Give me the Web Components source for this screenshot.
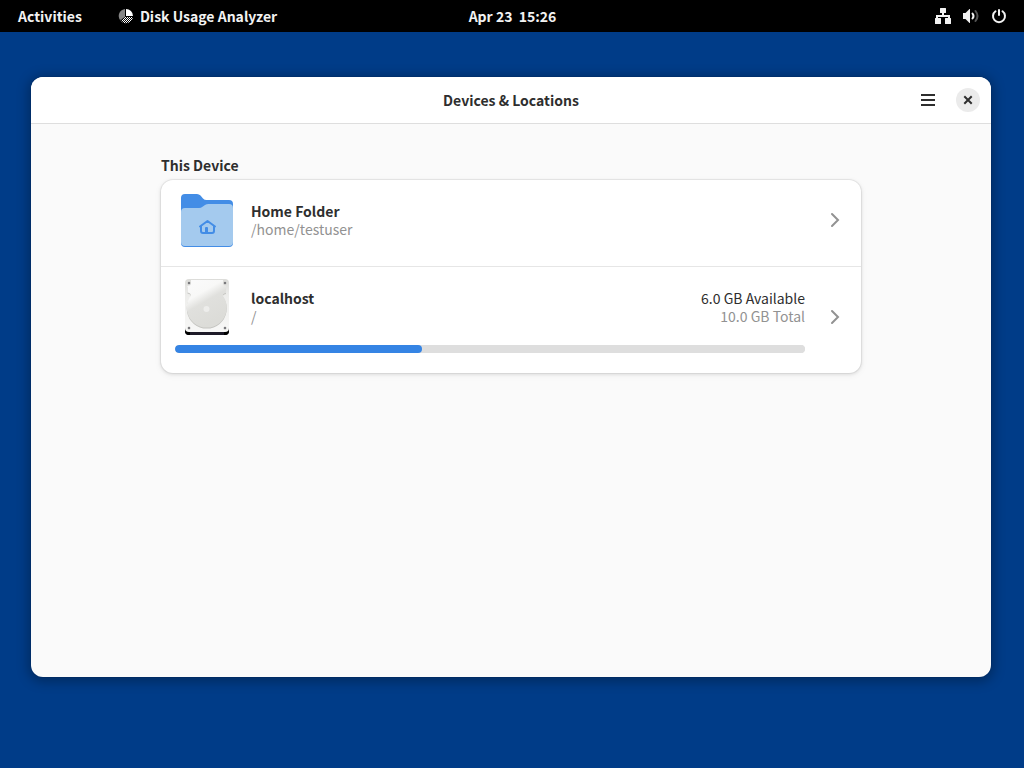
<!DOCTYPE html>
<html lang="en">
<head>
<meta charset="utf-8">
<title>Disk Usage Analyzer</title>
<style>
html, body { height: 100%; margin: 0; }
body { background: #003c88; font-family: "Noto Sans CJK SC", "Noto Sans", sans-serif; font-size: 14px; line-height: 18px; color: #2e2e2e; }
</style>
</head>
<body>
<desktop-shell>
  <top-bar slot="bar"></top-bar>
  <app-window heading="Devices &amp; Locations">
    <location-list heading="This Device">
      <location-row name="Home Folder" path="/home/testuser"><folder-icon slot="icon"></folder-icon></location-row>
      <location-row name="localhost" path="/" available="6.0 GB Available" total="10.0 GB Total" used="39.2"><drive-icon slot="icon"></drive-icon></location-row>
    </location-list>
  </app-window>
</desktop-shell>
<script>
class Base extends HTMLElement {
  connectedCallback() {
    if (!this.shadowRoot) this.attachShadow({ mode: "open" }).innerHTML = this.render();
  }
  text(name) {
    return (this.getAttribute(name) || "").replace(/&/g, "&amp;").replace(/</g, "&lt;");
  }
}

customElements.define("desktop-shell", class extends Base {
  render() {
    return `<style>
      :host { display: flex; flex-direction: column; min-height: 100vh; }
      main { flex: 1; display: flex; padding: 45px 33px 91px 31px; }
      ::slotted(app-window) { flex: 1; }
    </style><slot name="bar"></slot><main><slot></slot></main>`;
  }
});

customElements.define("top-bar", class extends Base {
  render() {
    return `<style>
      :host { display: block; background: #000; color: #f2f2f2; font-weight: 700; }
      header { display: grid; grid-template-columns: 1fr auto 1fr; align-items: center; height: 32px; padding: 0 17px 0 18px; }
      nav { display: flex; gap: 36px; }
      button { display: flex; align-items: center; gap: 6px; border: 0; padding: 0; background: none; font: inherit; color: inherit; white-space: pre; }
      .status { justify-self: end; gap: 12px; }
      svg { display: block; width: 16px; height: 16px; }
    </style>
    <header>
      <nav>
        <button>Activities</button>
        <button><svg viewBox="0 0 16 16" aria-hidden="true">
          <defs><pattern id="dots" width="2" height="2" patternUnits="userSpaceOnUse"><path d="M0 0h1v1H0zM1 1h1v1H1z" fill="#fff"/></pattern></defs>
          <path d="M7 1A7 7 0 0 0 2 12L7 9z" fill="#858585"/>
          <path d="M8 1a7 7 0 0 1 7 7H8z" fill="#fff"/>
          <path d="M7 9h8a7 7 0 0 1-12.500 3.500z" fill="url(#dots)"/>
        </svg>Disk Usage Analyzer</button>
      </nav>
      <button>Apr 23  15:26</button>
      <button class="status" aria-label="System menu">
        <svg viewBox="0 0 16 16" fill="#f2f2f2"><path d="M5.500 0h5q.5 0 .5.500v4q0 .5-.5.500H9v2h6v3h.5q.5 0 .5.500v5q0 .5-.5.500h-5q-.5 0-.5-.5v-5q0-.5.500-.5H13V9H3v1h2.500q.5 0 .5.500v5q0 .5-.5.500h-5Q0 16 0 15.500v-5Q0 10 .5 10H1V7h6V5H5.500Q5 5 5 4.500v-4Q5 0 5.500 0z"/></svg>
        <svg viewBox="0 0 16 16" fill="none" stroke="#f2f2f2" stroke-width="2" stroke-linecap="round"><path d="M0 5h2.500L6.500 1H7v14h-.5l-4-4H0z" fill="#f2f2f2" stroke="none"/><path d="M9.500 5.500q2 2.500 0 5"/><path d="M12.500 3q4 5 0 10" opacity=".35"/></svg>
        <svg viewBox="0 0 16 16" fill="none" stroke="#f2f2f2" stroke-width="2" stroke-linecap="round"><path d="M8 2v5M4.500 3.300a6 6 0 1 0 7 0"/></svg>
      </button>
    </header>`;
  }
});

customElements.define("app-window", class extends Base {
  render() {
    return `<style>
      :host { display: flex; flex-direction: column; overflow: hidden; border-radius: 12px; background: #fafafa; box-shadow: 0 2px 12px 3px rgba(0,0,0,.28), 0 0 0 1px rgba(0,0,0,.06); }
      header { display: grid; grid-template-columns: 1fr auto 1fr; align-items: center; height: 46px; padding: 0 11px; background: #fff; border-bottom: 1px solid #dedede; }
      h1 { grid-column: 2; margin: 0; font: inherit; font-weight: 700; }
      .controls { justify-self: end; display: flex; gap: 16px; align-items: center; }
      button { display: grid; place-items: center; width: 24px; height: 24px; border: 0; padding: 0; border-radius: 50%; background: none; color: #2e2e2e; }
      .close { background: #ebebeb; }
      svg { display: block; width: 16px; height: 16px; }
      section { padding: 32px 24px; }
    </style>
    <header><h1>${this.text("heading")}</h1>
      <div class="controls">
        <button aria-label="Main menu"><svg viewBox="0 0 16 16" fill="currentColor"><path d="M1 2h14v2H1zM1 7h14v2H1zM1 12h14v2H1z"/></svg></button>
        <button class="close" aria-label="Close"><svg viewBox="0 0 16 16" fill="none" stroke="currentColor" stroke-width="2" stroke-linecap="square"><path d="M5 5l6 6M11 5l-6 6"/></svg></button>
      </div>
    </header>
    <section><slot></slot></section>`;
  }
});

customElements.define("location-list", class extends Base {
  render() {
    return `<style>
      :host { display: block; max-width: 700px; margin: 0 auto; }
      h2 { margin: 0 0 6px; font: inherit; font-weight: 700; }
      .card { border-radius: 12px; overflow: hidden; background: #fff; box-shadow: 0 0 0 1px rgba(0,0,0,.05), 0 1px 3px 1px rgba(0,0,0,.08), 0 2px 6px 2px rgba(0,0,0,.03); }
      ::slotted(:not(:last-child)) { border-bottom: 1px solid #e6e6e6; }
    </style><h2>${this.text("heading")}</h2><div class="card"><slot></slot></div>`;
  }
});

customElements.define("location-row", class extends Base {
  render() {
    const usage = this.hasAttribute("used");
    return `<style>
      :host { display: block; }
      button { display: flex; align-items: center; gap: 22px; width: 100%; border: 0; padding: 8px 18px 14px 14px; background: none; font: inherit; color: inherit; text-align: left; }
      .body { flex: 1; display: block; }
      .line { display: flex; align-items: center; gap: 12px; }
      .line > span { display: flex; flex-direction: column; }
      .size { margin-left: auto; text-align: right; }
      b { font-weight: 700; }
      .dim { color: #929292; }
      progress { display: block; appearance: none; width: 100%; height: 8px; margin: 6px 0; border: 0; border-radius: 4px; overflow: hidden; background: #dedede; }
      progress::-webkit-progress-bar { background: #dedede; border-radius: 4px; }
      progress::-webkit-progress-value { background: #3584e4; border-radius: 4px; }
      svg { display: block; width: 16px; height: 16px; }
    </style>
    <button>
      <span class="body">
        <span class="line"><slot name="icon"></slot>
          <span><b>${this.text("name")}</b><span class="dim">${this.text("path")}</span></span>
          ${usage ? `<span class="size"><span>${this.text("available")}</span><span class="dim">${this.text("total")}</span></span>` : ""}
        </span>
        ${usage ? `<progress max="100" value="${this.text("used")}" aria-label="Space used"></progress>` : ""}
      </span>
      <svg viewBox="0 0 16 16" fill="none" stroke="#929292" stroke-width="2" stroke-linecap="round" aria-hidden="true"><path d="M5 2l6 6-6 6"/></svg>
    </button>`;
  }
});

customElements.define("folder-icon", class extends Base {
  render() {
    return `<style>:host, svg { display: block; width: 64px; height: 64px; }</style>
    <svg viewBox="0 0 64 64" aria-hidden="true">
      <path d="M6 10q0-4 4-4h12q2 0 3.500 1.500L28 10.500q1.500 1.500 3.500 1.500H54q4 0 4 4v39q0 4-4 4H10q-4 0-4-4z" fill="#438de6"/>
      <path d="M6 24q0-4 4-4h14q2 0 3.500-1.200l2.500-1.700Q31.500 16 33.500 16H54q4 0 4 4v34q0 4-4 4H10q-4 0-4-4z" fill="#a4caee"/>
      <path d="M25 38.500l7.500-5.500 7.500 5.500M26 38v5q0 2 2 2h9q2 0 2-2v-5" fill="none" stroke="#438de6" stroke-width="2" stroke-linecap="round" stroke-linejoin="round"/>
      <path d="M30 45v-5q0-1 1-1h1q1 0 1 1v5z" fill="#438de6"/>
    </svg>`;
  }
});

customElements.define("drive-icon", class extends Base {
  render() {
    return `<style>:host, svg { display: block; width: 64px; height: 64px; }</style>
    <svg viewBox="0 0 64 64" aria-hidden="true">
      <defs>
        <linearGradient id="plate" x1="0" y1="0" x2="0" y2="1"><stop offset="0" stop-color="#dcdcd9"/><stop offset=".3" stop-color="#ededeb"/><stop offset="1" stop-color="#f8f8f7"/></linearGradient>
        <linearGradient id="sheen" gradientUnits="userSpaceOnUse" x1="20" y1="6" x2="42" y2="44"><stop offset="0" stop-color="#fafafa"/><stop offset=".3" stop-color="#f8f8f7"/><stop offset=".52" stop-color="#e0e0dd"/><stop offset="1" stop-color="#dcdcd8"/></linearGradient>
        <path id="cover" d="M16 5h32v3q0 3 3 3v7q-2 0-3 1.500-.5 1.500 1 3a20 20 0 1 1-34.500 0q2-2 1-3.500-1-1.500-3-1.500V11q3.500 0 3.500-3z"/>
      </defs>
      <rect x="10" y="48" width="44" height="12" rx="4" fill="#1d1a28"/>
      <path d="M10 52h5v8h-1q-4 0-4-4zM54 52h-5v8h1q4 0 4-4z" fill="#000"/>
      <rect x="10" y="4" width="44" height="53" rx="4" fill="url(#plate)"/>
      <use href="#cover" y="1" fill="#c4c4c0"/>
      <use href="#cover" fill="url(#sheen)"/>
      <circle cx="31.500" cy="34" r="3" fill="#ededeb"/>
      <g fill="#b8b8b6"><circle cx="14" cy="8" r="1.500"/><circle cx="50" cy="8" r="1.500"/><circle cx="14" cy="53" r="1.500"/><circle cx="50" cy="53" r="1.500"/></g>
      <g fill="#66666a"><circle cx="14" cy="8" r="1"/><circle cx="50" cy="8" r="1"/><circle cx="14" cy="53" r="1"/><circle cx="50" cy="53" r="1"/></g>
    </svg>`;
  }
});
</script>
</body>
</html>
